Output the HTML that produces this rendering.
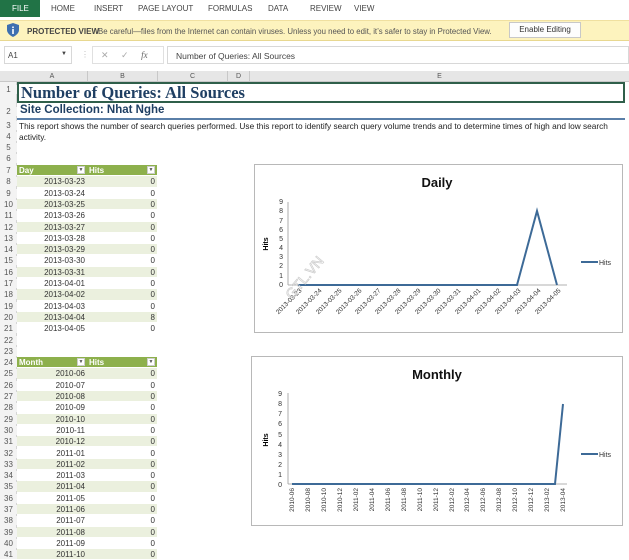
<!DOCTYPE html>
<html><head><meta charset="utf-8"><style>
*{margin:0;padding:0;box-sizing:border-box}
body{width:629px;height:555px;overflow:hidden;background:#fff;font-family:"Liberation Sans",sans-serif;position:relative}
.a{position:absolute}
.tabs span{position:absolute;top:4px;font-size:8px;color:#444}
.rn{position:absolute;left:0;width:17px;font-size:8px;color:#555;text-align:center;background:#f3f3f3}
.r{position:absolute;left:17px;width:140px;height:11.3px;font-size:8px;color:#333;border-bottom:1px solid #fff}
.r .d{position:absolute;left:0;width:70px;text-align:right;padding-right:2px;top:1px}
.r .h{position:absolute;left:70px;width:70px;text-align:right;padding-right:2px;top:1px}
.g{background:#ebf0de}
.hd{background:#8db04c;color:#fff;font-weight:bold}
.dd{position:absolute;width:8px;height:8px;background:#fff;border:1px solid #ccc;top:1px;font-size:5px;color:#555;text-align:center;line-height:7px}
</style></head><body>
<div class="a" style="left:0;top:0;width:629px;height:18px;background:#fff"></div>
<div class="a" style="left:0;top:0;width:40px;height:17px;background:#217346"></div>
<div class="tabs">
<span style="left:12px;color:#fff">FILE</span>
<span style="left:51px">HOME</span>
<span style="left:94px">INSERT</span>
<span style="left:138px">PAGE LAYOUT</span>
<span style="left:208px">FORMULAS</span>
<span style="left:268px">DATA</span>
<span style="left:310px">REVIEW</span>
<span style="left:354px">VIEW</span>
</div>
<div class="a" style="left:0;top:20px;width:629px;height:21px;background:#fdf3be;border-top:1px solid #f0e0a0;border-bottom:1px solid #e8d890"></div>
<svg class="a" style="left:7px;top:23px" width="12" height="14" viewBox="0 0 12 14"><path d="M6 0 L12 2 V7 C12 10 9 12.5 6 14 C3 12.5 0 10 0 7 V2Z" fill="#3e6fb0"/><rect x="5.2" y="6" width="1.6" height="5" fill="#fff"/><rect x="5.2" y="3.5" width="1.6" height="1.6" fill="#fff"/></svg>
<div class="a" style="left:27px;top:27px;font-size:8px;color:#444;font-weight:bold">PROTECTED VIEW</div>
<div class="a" style="left:98px;top:27px;font-size:7.8px;color:#555;white-space:nowrap">Be careful—files from the Internet can contain viruses. Unless you need to edit, it’s safer to stay in Protected View.</div>
<div class="a" style="left:509px;top:22px;width:72px;height:16px;background:#fdfdfd;border:1px solid #c8c8c8;font-size:8px;color:#333;text-align:center;line-height:14px">Enable Editing</div>
<div class="a" style="left:4px;top:46px;width:68px;height:18px;border:1px solid #d8d8d8;font-size:8px;color:#444;padding:4px 3px">A1<span style="position:absolute;right:4px;top:4px;font-size:6px">▼</span></div>
<div class="a" style="left:81px;top:50px;font-size:8px;color:#bbb">⋮</div>
<div class="a" style="left:92px;top:46px;width:72px;height:18px;border:1px solid #e0e0e0;font-size:9px;color:#aaa;padding:3px 8px;word-spacing:10px">✕ ✓ <i style="color:#666;font-family:'Liberation Serif'">fx</i></div>
<div class="a" style="left:167px;top:46px;width:462px;height:18px;border:1px solid #d8d8d8;font-size:8.5px;color:#444;padding:4px 8px">Number of Queries: All Sources</div>
<div class="a" style="left:0;top:71px;width:629px;height:11px;background:#e6e6e6;border-bottom:1px solid #c8c8c8"></div>
<div class="a" style="left:17px;top:71px;width:71px;height:11px;border-right:1px solid #c8c8c8;font-size:7px;color:#555;text-align:center;line-height:11px">A</div>
<div class="a" style="left:88px;top:71px;width:70px;height:11px;border-right:1px solid #c8c8c8;font-size:7px;color:#555;text-align:center;line-height:11px">B</div>
<div class="a" style="left:158px;top:71px;width:70px;height:11px;border-right:1px solid #c8c8c8;font-size:7px;color:#555;text-align:center;line-height:11px">C</div>
<div class="a" style="left:228px;top:71px;width:22px;height:11px;border-right:1px solid #c8c8c8;font-size:7px;color:#555;text-align:center;line-height:11px">D</div>
<div class="a" style="left:250px;top:71px;width:379px;height:11px;font-size:7px;color:#555;text-align:center;line-height:11px">E</div>
<div class="a" style="left:0;top:82px;width:17px;height:473px;background:#f3f3f3;border-right:1px solid #d5d5d5"></div>
<div class="a" style="left:17px;top:82px;width:608px;height:21px;border:2px solid #2f5f4a"></div>
<div class="a" style="left:21px;top:83px;font-family:'Liberation Serif',serif;font-size:16.5px;font-weight:bold;color:#1f3f63">Number of Queries: All Sources</div>
<div class="a" style="left:20px;top:104px;font-size:11.5px;font-weight:bold;color:#1f3f63">Site Collection: Nhat Nghe</div>
<div class="a" style="left:17px;top:118px;width:608px;height:2px;background:#5a7fa8"></div>
<div class="a" style="left:19px;top:121px;font-size:8.3px;color:#222;width:606px;line-height:11px">This report shows the number of search queries performed. Use this report to identify search query volume trends and to determine times of high and low search activity.</div>
<div class="rn" style="top:85px;">1</div><div class="rn" style="top:107px">2</div><div class="rn" style="top:121px">3</div><div class="rn" style="top:132px">4</div><div class="rn" style="top:143px">5</div><div class="rn" style="top:154px">6</div>
<div class="a" style="left:0;top:165px">
<div class="rn" style="top:1px">7</div><div class="r hd" style="top:0"><div class="d" style="text-align:left;padding-left:2px">Day</div><div class="dd" style="left:60px">▼</div><div class="h" style="text-align:left;padding-left:2px">Hits</div><div class="dd" style="left:130px">▼</div></div>
<div class="rn" style="top:12.3px">8</div><div class="r g" style="top:11.3px"><div class="d">2013-03-23</div><div class="h">0</div></div>
<div class="rn" style="top:23.6px">9</div><div class="r" style="top:22.6px"><div class="d">2013-03-24</div><div class="h">0</div></div>
<div class="rn" style="top:34.9px">10</div><div class="r g" style="top:33.9px"><div class="d">2013-03-25</div><div class="h">0</div></div>
<div class="rn" style="top:46.2px">11</div><div class="r" style="top:45.2px"><div class="d">2013-03-26</div><div class="h">0</div></div>
<div class="rn" style="top:57.5px">12</div><div class="r g" style="top:56.5px"><div class="d">2013-03-27</div><div class="h">0</div></div>
<div class="rn" style="top:68.8px">13</div><div class="r" style="top:67.8px"><div class="d">2013-03-28</div><div class="h">0</div></div>
<div class="rn" style="top:80.1px">14</div><div class="r g" style="top:79.1px"><div class="d">2013-03-29</div><div class="h">0</div></div>
<div class="rn" style="top:91.4px">15</div><div class="r" style="top:90.4px"><div class="d">2013-03-30</div><div class="h">0</div></div>
<div class="rn" style="top:102.7px">16</div><div class="r g" style="top:101.7px"><div class="d">2013-03-31</div><div class="h">0</div></div>
<div class="rn" style="top:114px">17</div><div class="r" style="top:113px"><div class="d">2013-04-01</div><div class="h">0</div></div>
<div class="rn" style="top:125.3px">18</div><div class="r g" style="top:124.3px"><div class="d">2013-04-02</div><div class="h">0</div></div>
<div class="rn" style="top:136.6px">19</div><div class="r" style="top:135.6px"><div class="d">2013-04-03</div><div class="h">0</div></div>
<div class="rn" style="top:147.9px">20</div><div class="r g" style="top:146.9px"><div class="d">2013-04-04</div><div class="h">8</div></div>
<div class="rn" style="top:159.2px">21</div><div class="r" style="top:158.2px"><div class="d">2013-04-05</div><div class="h">0</div></div>
<div class="rn" style="top:170.5px">22</div>
<div class="rn" style="top:181.8px">23</div>
<div class="rn" style="top:193.1px">24</div><div class="r hd" style="top:192.1px"><div class="d" style="text-align:left;padding-left:2px">Month</div><div class="dd" style="left:60px">▼</div><div class="h" style="text-align:left;padding-left:2px">Hits</div><div class="dd" style="left:130px">▼</div></div>
<div class="rn" style="top:204.4px">25</div><div class="r g" style="top:203.4px"><div class="d">2010-06</div><div class="h">0</div></div>
<div class="rn" style="top:215.7px">26</div><div class="r" style="top:214.7px"><div class="d">2010-07</div><div class="h">0</div></div>
<div class="rn" style="top:227px">27</div><div class="r g" style="top:226px"><div class="d">2010-08</div><div class="h">0</div></div>
<div class="rn" style="top:238.3px">28</div><div class="r" style="top:237.3px"><div class="d">2010-09</div><div class="h">0</div></div>
<div class="rn" style="top:249.6px">29</div><div class="r g" style="top:248.6px"><div class="d">2010-10</div><div class="h">0</div></div>
<div class="rn" style="top:260.9px">30</div><div class="r" style="top:259.9px"><div class="d">2010-11</div><div class="h">0</div></div>
<div class="rn" style="top:272.2px">31</div><div class="r g" style="top:271.2px"><div class="d">2010-12</div><div class="h">0</div></div>
<div class="rn" style="top:283.5px">32</div><div class="r" style="top:282.5px"><div class="d">2011-01</div><div class="h">0</div></div>
<div class="rn" style="top:294.8px">33</div><div class="r g" style="top:293.8px"><div class="d">2011-02</div><div class="h">0</div></div>
<div class="rn" style="top:306.1px">34</div><div class="r" style="top:305.1px"><div class="d">2011-03</div><div class="h">0</div></div>
<div class="rn" style="top:317.4px">35</div><div class="r g" style="top:316.4px"><div class="d">2011-04</div><div class="h">0</div></div>
<div class="rn" style="top:328.7px">36</div><div class="r" style="top:327.7px"><div class="d">2011-05</div><div class="h">0</div></div>
<div class="rn" style="top:340px">37</div><div class="r g" style="top:339px"><div class="d">2011-06</div><div class="h">0</div></div>
<div class="rn" style="top:351.3px">38</div><div class="r" style="top:350.3px"><div class="d">2011-07</div><div class="h">0</div></div>
<div class="rn" style="top:362.6px">39</div><div class="r g" style="top:361.6px"><div class="d">2011-08</div><div class="h">0</div></div>
<div class="rn" style="top:373.9px">40</div><div class="r" style="top:372.9px"><div class="d">2011-09</div><div class="h">0</div></div>
<div class="rn" style="top:385.2px">41</div><div class="r g" style="top:384.2px"><div class="d">2011-10</div><div class="h">0</div></div>
</div>
<svg class="a" style="left:0;top:0" width="629" height="555" font-family="Liberation Sans, sans-serif">
<rect x="254.5" y="164.5" width="368" height="168" fill="#fff" stroke="#b8b8b8"/>
<text x="437" y="187" font-size="13" font-weight="bold" text-anchor="middle" fill="#111">Daily</text>
<g font-size="7" fill="#333" text-anchor="end">
<text x="283" y="287">0</text><text x="283" y="278">1</text><text x="283" y="268">2</text><text x="283" y="259">3</text><text x="283" y="250">4</text><text x="283" y="241">5</text><text x="283" y="232">6</text><text x="283" y="223">7</text><text x="283" y="213">8</text><text x="283" y="204">9</text>
</g>
<text transform="translate(268,244) rotate(-90)" font-size="7" font-weight="bold" text-anchor="middle">Hits</text>
<line x1="288" y1="202" x2="288" y2="285" stroke="#999" stroke-width="0.8"/>
<line x1="288" y1="285" x2="567" y2="285" stroke="#999" stroke-width="0.8"/>
<polyline points="298,285 517,285 537,211 557,285" fill="none" stroke="#3d6a97" stroke-width="2"/>
<g font-size="6.5" fill="#333" text-anchor="end">
<text transform="translate(302,291) rotate(-45)">2013-03-23</text>
<text transform="translate(322,291) rotate(-45)">2013-03-24</text>
<text transform="translate(342,291) rotate(-45)">2013-03-25</text>
<text transform="translate(362,291) rotate(-45)">2013-03-26</text>
<text transform="translate(381,291) rotate(-45)">2013-03-27</text>
<text transform="translate(401,291) rotate(-45)">2013-03-28</text>
<text transform="translate(421,291) rotate(-45)">2013-03-29</text>
<text transform="translate(441,291) rotate(-45)">2013-03-30</text>
<text transform="translate(461,291) rotate(-45)">2013-03-31</text>
<text transform="translate(481,291) rotate(-45)">2013-04-01</text>
<text transform="translate(501,291) rotate(-45)">2013-04-02</text>
<text transform="translate(521,291) rotate(-45)">2013-04-03</text>
<text transform="translate(541,291) rotate(-45)">2013-04-04</text>
<text transform="translate(561,291) rotate(-45)">2013-04-05</text>
</g>
<line x1="581" y1="262" x2="598" y2="262" stroke="#3d6a97" stroke-width="2"/>
<text x="599" y="265" font-size="7" fill="#333">Hits</text>
<text transform="translate(292,300) rotate(-50)" font-size="14" fill="none" stroke="#ccc" stroke-width="0.7">GTL.VN</text>
<rect x="251.5" y="356.5" width="371" height="169" fill="#fff" stroke="#b8b8b8"/>
<text x="437" y="379" font-size="13" font-weight="bold" text-anchor="middle" fill="#111">Monthly</text>
<g font-size="7" fill="#333" text-anchor="end">
<text x="282" y="487">0</text><text x="282" y="477">1</text><text x="282" y="467">2</text><text x="282" y="457">3</text><text x="282" y="447">4</text><text x="282" y="437">5</text><text x="282" y="426">6</text><text x="282" y="416">7</text><text x="282" y="406">8</text><text x="282" y="396">9</text>
</g>
<text transform="translate(268,440) rotate(-90)" font-size="7" font-weight="bold" text-anchor="middle">Hits</text>
<line x1="288" y1="393" x2="288" y2="484" stroke="#999" stroke-width="0.8"/>
<line x1="288" y1="484" x2="567" y2="484" stroke="#999" stroke-width="0.8"/>
<polyline points="292,484 555,484 563,404" fill="none" stroke="#3d6a97" stroke-width="2"/>
<g font-size="6.5" fill="#333" text-anchor="end">
<text transform="translate(294,488) rotate(-90)">2010-06</text>
<text transform="translate(310,488) rotate(-90)">2010-08</text>
<text transform="translate(326,488) rotate(-90)">2010-10</text>
<text transform="translate(342,488) rotate(-90)">2010-12</text>
<text transform="translate(358,488) rotate(-90)">2011-02</text>
<text transform="translate(374,488) rotate(-90)">2011-04</text>
<text transform="translate(390,488) rotate(-90)">2011-06</text>
<text transform="translate(406,488) rotate(-90)">2011-08</text>
<text transform="translate(422,488) rotate(-90)">2011-10</text>
<text transform="translate(438,488) rotate(-90)">2011-12</text>
<text transform="translate(454,488) rotate(-90)">2012-02</text>
<text transform="translate(469,488) rotate(-90)">2012-04</text>
<text transform="translate(485,488) rotate(-90)">2012-06</text>
<text transform="translate(501,488) rotate(-90)">2012-08</text>
<text transform="translate(517,488) rotate(-90)">2012-10</text>
<text transform="translate(533,488) rotate(-90)">2012-12</text>
<text transform="translate(549,488) rotate(-90)">2013-02</text>
<text transform="translate(565,488) rotate(-90)">2013-04</text>
</g>
<line x1="581" y1="454" x2="598" y2="454" stroke="#3d6a97" stroke-width="2"/>
<text x="599" y="457" font-size="7" fill="#333">Hits</text>
</svg>
</body></html>
